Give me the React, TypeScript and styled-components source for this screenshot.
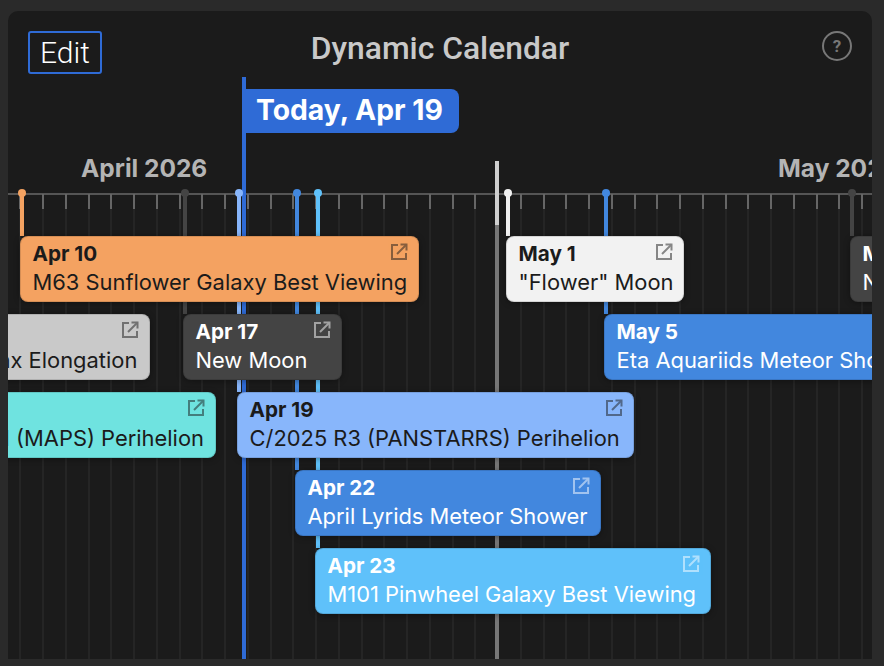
import React from "react";
import styled, { createGlobalStyle } from "styled-components";

const Global = createGlobalStyle`
  html, body {
    margin: 0;
    height: 100%;
    background: #2a2a2a;
  }
`;

const Page = styled.div`
  width: 884px;
  height: 666px;
  padding: 11px 12px 7px 8px;
  box-sizing: border-box;
  display: flex;
`;

const Panel = styled.div`
  flex: 1;
  display: flex;
  flex-direction: column;
  background: #1b1b1b;
  border-radius: 10px 10px 0 0;
  overflow: hidden;
`;

const Header = styled.div`
  height: 66px;
  flex: none;
  box-sizing: border-box;
  padding: 20px 20px 0 20px;
  display: grid;
  grid-template-columns: 1fr auto 1fr;
  align-items: start;
`;

const EditButton = styled.button`
  width: 74px;
  height: 43px;
  box-sizing: border-box;
  background: transparent;
  border: 2px solid #2f6bd6;
  border-radius: 3px;
  color: #fff;
  font: 300 30px "Roboto", sans-serif;
  padding: 0;
`;

const Title = styled.div`
  margin-top: -3px;
  font: 500 31.8px/40px "Roboto", sans-serif;
  color: #c9c9c9;
  white-space: nowrap;
`;

const HelpIcon = styled.div`
  justify-self: end;
  width: 30px;
  height: 30px;
  box-sizing: border-box;
  border: 2px solid #777;
  border-radius: 50%;
  color: #777;
  font: 700 17px/26px "Roboto", sans-serif;
  text-align: center;
`;

const Timeline = styled.div`
  flex: 1;
  position: relative;
  overflow: hidden;
`;

const Axis = styled.div`
  position: absolute;
  left: 0;
  right: 0;
  top: 116px;
  height: 2px;
  background: #555;
`;

const Tick = styled.div<{ $x: number }>`
  position: absolute;
  left: ${(p) => p.$x - 1}px;
  top: 117px;
  bottom: 0;
  width: 2px;
  background: linear-gradient(#666 0, #666 15px, #252525 15px);
`;

const MonthLabel = styled.div<{ $x: number }>`
  position: absolute;
  left: ${(p) => p.$x}px;
  top: 77px;
  font: 700 24.5px/28px "Inter", sans-serif;
  color: #b4b4b4;
  white-space: nowrap;
`;

const MonthMarker = styled.div`
  position: absolute;
  left: 487px;
  top: 84px;
  bottom: 0;
  width: 4px;
  background: linear-gradient(#cfcfcf 0, #cfcfcf 64px, #777 64px);
`;

const TodayLine = styled.div`
  position: absolute;
  left: 234px;
  top: 0;
  bottom: 0;
  width: 4px;
  background: #2f6bd6;
`;

const TodayFlag = styled.div`
  position: absolute;
  left: 238px;
  top: 12px;
  width: 213px;
  height: 44px;
  box-sizing: border-box;
  padding-left: 10px;
  background: #2f6bd6;
  border-radius: 0 8px 8px 0;
  color: #fff;
  font: 700 28.3px/43px "Inter", sans-serif;
  white-space: nowrap;
`;

const Stem = styled.div<{ $x: number; $end: number; $color: string }>`
  position: absolute;
  left: ${(p) => p.$x - 2}px;
  top: 117px;
  width: 4px;
  height: ${(p) => p.$end - 117}px;
  background: ${(p) => p.$color};

  &::before {
    content: "";
    position: absolute;
    left: -2px;
    top: -5px;
    width: 8px;
    height: 8px;
    border-radius: 50%;
    background: ${(p) => p.$color};
  }
`;

const Card = styled.div<{ $x: number; $y: number; $w: number; $bg: string; $dark: boolean }>`
  position: absolute;
  left: ${(p) => p.$x}px;
  top: ${(p) => p.$y}px;
  width: ${(p) => p.$w}px;
  height: 66px;
  box-sizing: border-box;
  padding: 3px 0 0 11.5px;
  background: ${(p) => p.$bg};
  border: 1px solid rgba(0, 0, 0, 0.12);
  border-radius: 8px;
  box-shadow: 0 1px 6px rgba(0, 0, 0, 0.35);
  color: ${(p) => (p.$dark ? "#fff" : "#1b1b1b")};
  font-family: "Inter", sans-serif;
  white-space: nowrap;
  overflow: hidden;
`;

const CardDate = styled.div`
  font-size: 20.7px;
  font-weight: 700;
  line-height: 28px;
`;

const CardName = styled.div`
  font-size: 21.9px;
  line-height: 29px;
`;

const LinkIcon = styled.svg`
  position: absolute;
  right: 10px;
  top: 6px;
  width: 18px;
  height: 18px;
  fill: none;
  stroke: currentColor;
  stroke-width: 2;
  opacity: 0.5;
`;

const OpenIcon = () => (
  <LinkIcon viewBox="0 0 18 18">
    <path d="M8 2H2v14h14v-6" />
    <path d="M7 11 16.5 1.5" />
    <path d="M10.5 1.5h6v6" />
  </LinkIcon>
);

type CalendarEvent = {
  x: number;
  y: number;
  w: number;
  stem?: number;
  color: string;
  dark?: boolean;
  date: string;
  name: string;
};

// page coordinates, shifted to the timeline origin when drawn
const originX = 8;
const originY = 77;

const events: CalendarEvent[] = [
  { x: 20, y: 236, w: 399, stem: 22, color: "#f4a261", date: "Apr 10", name: "M63 Sunflower Galaxy Best Viewing" },
  { x: -127, y: 314, w: 277, color: "#c9c9c9", date: "Apr 3", name: "Mercury Max Elongation" },
  { x: 183, y: 314, w: 159, stem: 185, color: "#444444", dark: true, date: "Apr 17", name: "New Moon" },
  { x: -110, y: 392, w: 326, color: "#6fe3e0", date: "Apr 4", name: "C/2026 A1 (MAPS) Perihelion" },
  { x: 237, y: 392, w: 397, stem: 239, color: "#88b6fb", date: "Apr 19", name: "C/2025 R3 (PANSTARRS) Perihelion" },
  { x: 295, y: 470, w: 306, stem: 297, color: "#4287de", dark: true, date: "Apr 22", name: "April Lyrids Meteor Shower" },
  { x: 315, y: 548, w: 396, stem: 318, color: "#5fc1fa", dark: true, date: "Apr 23", name: "M101 Pinwheel Galaxy Best Viewing" },
  { x: 506, y: 236, w: 178, stem: 508, color: "#f2f2f2", date: "May 1", name: "\"Flower\" Moon" },
  { x: 604, y: 314, w: 340, stem: 606, color: "#4287de", dark: true, date: "May 5", name: "Eta Aquariids Meteor Shower" },
  { x: 850, y: 236, w: 160, stem: 852, color: "#444444", dark: true, date: "May 16", name: "New Moon" },
];

const ticks = Array.from({ length: 38 }, (_, i) => 20.25 + i * 22.75);

export default function App() {
  return (
    <Page>
      <Global />
      <Panel>
        <Header>
          <EditButton>Edit</EditButton>
          <Title>Dynamic Calendar</Title>
          <HelpIcon>?</HelpIcon>
        </Header>
        <Timeline>
          <Axis />
          {ticks.map((x) => (
            <Tick key={x} $x={x - originX} />
          ))}
          <MonthLabel $x={81 - originX}>April 2026</MonthLabel>
          <MonthLabel $x={778 - originX}>May 2026</MonthLabel>
          <MonthMarker />
          <TodayLine />
          <TodayFlag>Today, Apr 19</TodayFlag>
          {events.map((e) =>
            e.stem ? (
              <Stem key={e.date} $x={e.stem - originX} $end={e.y - originY} $color={e.color} />
            ) : null
          )}
          {events.map((e) => (
            <Card
              key={e.date}
              $x={e.x - originX}
              $y={e.y - originY}
              $w={e.w}
              $bg={e.color}
              $dark={!!e.dark}
            >
              <CardDate>{e.date}</CardDate>
              <CardName>{e.name}</CardName>
              <OpenIcon />
            </Card>
          ))}
        </Timeline>
      </Panel>
    </Page>
  );
}
